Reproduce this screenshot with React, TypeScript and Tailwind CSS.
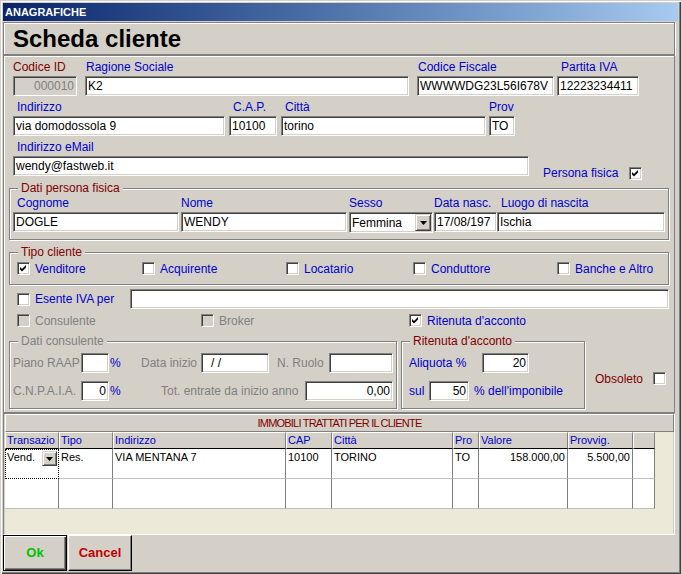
import React from "react";

const blue = "text-[#0000cc]";
const red = "text-[#800000]";
const gray = "text-[#808080]";

const sunken =
  "border border-t-[#808080] border-l-[#808080] border-b-white border-r-white shadow-[inset_1px_1px_0_#404040,inset_-1px_-1px_0_#d4d0c8]";
const etched = "border border-[#808080] shadow-[inset_1px_1px_0_#fff,1px_1px_0_#fff]";

function Input({
  value = "",
  className = "",
  right = false,
  disabled = false,
}: {
  value?: string;
  className?: string;
  right?: boolean;
  disabled?: boolean;
}) {
  return (
    <div
      className={`${sunken} h-[20px] shrink-0 flex items-center px-[2px] overflow-hidden whitespace-nowrap text-[12px] ${
        right ? "justify-end" : ""
      } ${disabled ? "bg-[#d4d0c8] text-[#808080]" : "bg-white text-black"} ${className}`}
    >
      {value}
    </div>
  );
}

function Field({
  label,
  color = blue,
  labelPad = "",
  className = "",
  children,
}: {
  label: string;
  color?: string;
  labelPad?: string;
  className?: string;
  children: React.ReactNode;
}) {
  return (
    <div className={`flex flex-col shrink-0 ${className}`}>
      <span className={`h-[16px] leading-[14px] text-[12px] whitespace-nowrap ${color} ${labelPad}`}>{label}</span>
      {children}
    </div>
  );
}

function Check({ checked = false, disabled = false }: { checked?: boolean; disabled?: boolean }) {
  return (
    <span
      className={`${sunken} w-[13px] h-[13px] shrink-0 flex items-center justify-center ${
        disabled ? "bg-[#d4d0c8]" : "bg-white"
      }`}
    >
      {checked && (
        <svg width="7" height="7" viewBox="0 0 7 7">
          <polygon points="0,2 2,4 6,0 6,2.6 2,6.6 0,4.6" fill="#000" />
        </svg>
      )}
    </span>
  );
}

function CheckItem({
  label,
  checked,
  disabled,
  className = "",
  color = blue,
}: {
  label: string;
  checked?: boolean;
  disabled?: boolean;
  className?: string;
  color?: string;
}) {
  return (
    <div className={`flex items-center gap-[5px] shrink-0 ${className}`}>
      <Check checked={checked} disabled={disabled} />
      <span className={`text-[12px] leading-[14px] whitespace-nowrap ${disabled ? gray : color}`}>{label}</span>
    </div>
  );
}

function Group({
  title,
  color,
  className = "",
  children,
}: {
  title: string;
  color: string;
  className?: string;
  children: React.ReactNode;
}) {
  return (
    <div className={`relative shrink-0 ${etched} ${className}`}>
      <span className={`absolute -top-[8px] left-[8px] px-[3px] bg-[#d4d0c8] leading-[14px] text-[12px] whitespace-nowrap ${color}`}>
        {title}
      </span>
      {children}
    </div>
  );
}

function DropBtn({ className = "" }: { className?: string }) {
  return (
    <span
      className={`flex items-center justify-center shrink-0 bg-[#d4d0c8] border border-t-[#d4d0c8] border-l-[#d4d0c8] border-b-[#404040] border-r-[#404040] shadow-[inset_1px_1px_0_#fff,inset_-1px_-1px_0_#808080] ${className}`}
    >
      <svg width="7" height="4" viewBox="0 0 7 4">
        <polygon points="0,0 7,0 3.5,4" fill="#000" />
      </svg>
    </span>
  );
}

const cols = [
  { name: "Transazio", w: "w-[54px]" },
  { name: "Tipo", w: "w-[54px]" },
  { name: "Indirizzo", w: "w-[173px]" },
  { name: "CAP", w: "w-[46px]" },
  { name: "Città", w: "w-[121px]" },
  { name: "Pro", w: "w-[26px]" },
  { name: "Valore", w: "w-[89px]" },
  { name: "Provvig.", w: "w-[65px]" },
  { name: "", w: "w-[22px]" },
];

const row1 = ["Vend.", "Res.", "VIA MENTANA 7", "10100", "TORINO", "TO", "158.000,00", "5.500,00", ""];

export default function App() {
  return (
    <div className="w-[681px] h-[574px] overflow-hidden bg-[#d4d0c8] font-['Liberation_Sans',Arial,sans-serif] text-black pt-[3px] pl-[3px] flex flex-col shadow-[inset_1px_1px_0_#d4d0c8,inset_2px_2px_0_#fff,inset_-1px_-1px_0_#404040,inset_-2px_-2px_0_#808080]">
      {/* title bar */}
      <div className="w-[675px] h-[18px] shrink-0 bg-linear-to-r from-[#0a246a] to-[#a6caf0] flex items-center pl-[2px] text-white font-bold text-[11px]">
        ANAGRAFICHE
      </div>

      {/* header */}
      <div className={`mt-[1px] w-[672px] h-[33px] shrink-0 ${etched} flex items-center pl-[9px] text-[24px] font-bold`}>
        Scheda cliente
      </div>

      {/* main form */}
      <div className="w-[672px] h-[358px] shrink-0 border border-[#808080] shadow-[inset_1px_1px_0_#fff] flex flex-col pt-[4px]">
        <div className="flex">
          <Field label="Codice ID" color={red} className="ml-[9px]">
            <Input value="000010" right disabled className="w-[64px]" />
          </Field>
          <Field label="Ragione Sociale" labelPad="pl-[1px]" className="ml-[8px]">
            <Input value="K2" className="w-[324px]" />
          </Field>
          <Field label="Codice Fiscale" labelPad="pl-[1px]" className="ml-[8px]">
            <Input value="WWWWDG23L56I678V" className="w-[137px]" />
          </Field>
          <Field label="Partita IVA" labelPad="pl-[4px]" className="ml-[3px]">
            <Input value="12223234411" className="w-[82px]" />
          </Field>
        </div>

        <div className="flex mt-[4px]">
          <Field label="Indirizzo" labelPad="pl-[4px]" className="ml-[9px]">
            <Input value="via domodossola 9" className="w-[212px]" />
          </Field>
          <Field label="C.A.P." labelPad="pl-[4px]" className="ml-[4px]">
            <Input value="10100" className="w-[48px]" />
          </Field>
          <Field label="Città" labelPad="pl-[4px]" className="ml-[4px]">
            <Input value="torino" className="w-[205px]" />
          </Field>
          <Field label="Prov" className="ml-[3px]">
            <Input value="TO" className="w-[26px]" />
          </Field>
        </div>

        <div className="flex items-end mt-[4px]">
          <Field label="Indirizzo eMail" labelPad="pl-[4px]" className="ml-[9px]">
            <Input value="wendy@fastweb.it" className="w-[516px]" />
          </Field>
          <div className="flex items-center h-[14px] ml-[14px] mb-[-4px]">
            <span className={`w-[86px] text-[12px] leading-[14px] ${blue}`}>Persona fisica</span>
            <Check checked />
          </div>
        </div>

        {/* Dati persona fisica */}
        <Group title="Dati persona fisica" color={red} className="mt-[12px] ml-[5px] w-[660px] pt-[7px] pb-[6px]">
          <div className="flex items-start">
            <Field label="Cognome" labelPad="pl-[4px]" className="ml-[3px]">
              <Input value="DOGLE" className="w-[166px]" />
            </Field>
            <Field label="Nome" className="ml-[2px]">
              <Input value="WENDY" className="w-[166px]" />
            </Field>
            <Field label="Sesso" className="ml-[2px]">
              <div className={`${sunken} bg-white w-[84px] h-[21px] flex items-center pl-[2px] pr-[1px] text-[12px]`}>
                <span className="flex-1">Femmina</span>
                <DropBtn className="w-[16px] h-[17px]" />
              </div>
            </Field>
            <Field label="Data nasc." className="ml-[1px]">
              <Input value="17/08/197" className="w-[63px]" />
            </Field>
            <Field label="Luogo di nascita" labelPad="pl-[4px]">
              <Input value="Ischia" className="w-[168px]" />
            </Field>
          </div>
        </Group>

        {/* Tipo cliente */}
        <Group title="Tipo cliente" color={red} className="mt-[12px] ml-[5px] w-[660px] pt-[9px] pb-[9px]">
          <div className="flex items-center h-[13px]">
            <CheckItem label="Venditore" checked className="ml-[7px] w-[125px]" />
            <CheckItem label="Acquirente" className="w-[144px]" />
            <CheckItem label="Locatario" className="w-[127px]" />
            <CheckItem label="Conduttore" className="w-[144px]" />
            <CheckItem label="Banche e Altro" />
          </div>
        </Group>

        <div className="flex items-center h-[20px] mt-[4px]">
          <CheckItem label="Esente IVA per" className="ml-[13px] w-[113px]" />
          <Input className="w-[539px]" />
        </div>

        <div className="flex items-center h-[13px] mt-[5px]">
          <CheckItem label="Consulente" disabled className="ml-[13px] w-[184px]" />
          <CheckItem label="Broker" disabled className="w-[208px]" />
          <CheckItem label="Ritenuta d'acconto" checked />
        </div>

        <div className="flex items-start mt-[14px]">
          {/* Dati consulente */}
          <Group title="Dati consulente" color={gray} className="ml-[5px] w-[388px] h-[68px] pt-[11px]">
            <div className="flex items-center h-[20px] text-[12px]">
              <span className={`ml-[3px] w-[68px] ${gray}`}>Piano RAAP</span>
              <Input className="w-[28px]" />
              <span className={`w-[32px] pl-[1px] ${blue}`}>%</span>
              <span className={`w-[60px] ${gray}`}>Data inizio</span>
              <Input value="/ /" className="w-[68px] pl-[9px]" />
              <span className={`ml-[8px] w-[52px] ${gray}`}>N. Ruolo</span>
              <Input className="w-[64px]" />
            </div>
            <div className="flex items-center h-[20px] mt-[8px] text-[12px]">
              <span className={`ml-[3px] w-[68px] ${gray}`}>C.N.P.A.I.A.</span>
              <Input value="0" right className="w-[28px]" />
              <span className={`w-[52px] pl-[1px] ${blue}`}>%</span>
              <span className={`w-[144px] ${gray}`}>Tot. entrate da inizio anno</span>
              <Input value="0,00" right className="w-[88px]" />
            </div>
          </Group>

          {/* Ritenuta d'acconto */}
          <Group title="Ritenuta d'acconto" color={red} className="ml-[4px] w-[184px] h-[68px] pt-[11px]">
            <div className="flex items-center h-[20px] text-[12px]">
              <span className={`ml-[7px] w-[73px] ${blue}`}>Aliquota %</span>
              <Input value="20" right className="w-[47px]" />
            </div>
            <div className="flex items-center h-[20px] mt-[8px] text-[12px]">
              <span className={`ml-[7px] w-[20px] ${blue}`}>sul</span>
              <Input value="50" right className="w-[40px]" />
              <span className={`pl-[5px] whitespace-nowrap ${blue}`}>% dell'imponibile</span>
            </div>
          </Group>

          <div className="flex items-center h-[13px] ml-[10px] mt-[31px]">
            <span className={`w-[58px] text-[12px] leading-[14px] ${red}`}>Obsoleto</span>
            <Check />
          </div>
        </div>
      </div>

      {/* immobili grid */}
      <div className="w-[672px] h-[122px] shrink-0 border border-t-[#808080] border-l-[#808080] border-b-white border-r-white pl-[1px] flex flex-col">
        <div className="w-[669px] h-[18px] shrink-0 border border-t-white border-l-white border-b-[#808080] border-r-[#808080] flex items-center justify-center text-[#800000] text-[11px] tracking-[-0.8px]">
          IMMOBILI TRATTATI PER IL CLIENTE
        </div>
        <div className="w-[668px] h-[102px] bg-[#ece9d8] flex flex-col text-[11px]">
          <div className="flex h-[17px]">
            {cols.map((c, i) => (
              <div
                key={i}
                className={`${c.w} h-[17px] bg-[#d4d0c8] border-t border-l border-t-white border-l-white border-r border-r-[#808080] border-b border-b-black pl-[1px] leading-[14px] text-[#0000cc] whitespace-nowrap overflow-hidden`}
              >
                {c.name}
              </div>
            ))}
          </div>
          <div className="flex h-[30px]">
            {cols.map((c, i) =>
              i === 0 ? (
                <div key={i} className={`${c.w} h-[30px] bg-white border border-dotted border-black flex items-start`}>
                  <span className="flex-1 leading-[14px] pl-[1px]">{row1[0]}</span>
                  <DropBtn className="w-[15px] h-[15px] mt-[1px] mr-[1px]" />
                </div>
              ) : (
                <div
                  key={i}
                  className={`${c.w} h-[30px] bg-white border-r border-r-[#808080] border-b border-b-[#c0c0c0] px-[2px] pt-[1px] leading-[14px] whitespace-nowrap overflow-hidden ${
                    i === 6 || i === 7 ? "text-right" : ""
                  }`}
                >
                  {row1[i]}
                </div>
              )
            )}
          </div>
          <div className="flex h-[30px]">
            {cols.map((c, i) => (
              <div
                key={i}
                className={`${c.w} h-[30px] bg-white border-r border-r-[#808080] border-b border-b-[#c0c0c0]`}
              />
            ))}
          </div>
        </div>
      </div>

      {/* buttons */}
      <div className="flex h-[36px] shrink-0">
        <button className="w-[64px] h-[36px] border border-black bg-[#d4d0c8] shadow-[inset_1px_1px_0_#fff,inset_-1px_-1px_0_#404040,inset_-2px_-2px_0_#808080] text-[13px] font-bold text-[#00c000]">
          Ok
        </button>
        <button className="ml-[1px] w-[64px] h-[36px] border border-t-white border-l-white border-b-black border-r-black bg-[#d4d0c8] shadow-[inset_-1px_-1px_0_#808080] text-[13px] font-bold text-[#c00000]">
          Cancel
        </button>
      </div>
    </div>
  );
}
